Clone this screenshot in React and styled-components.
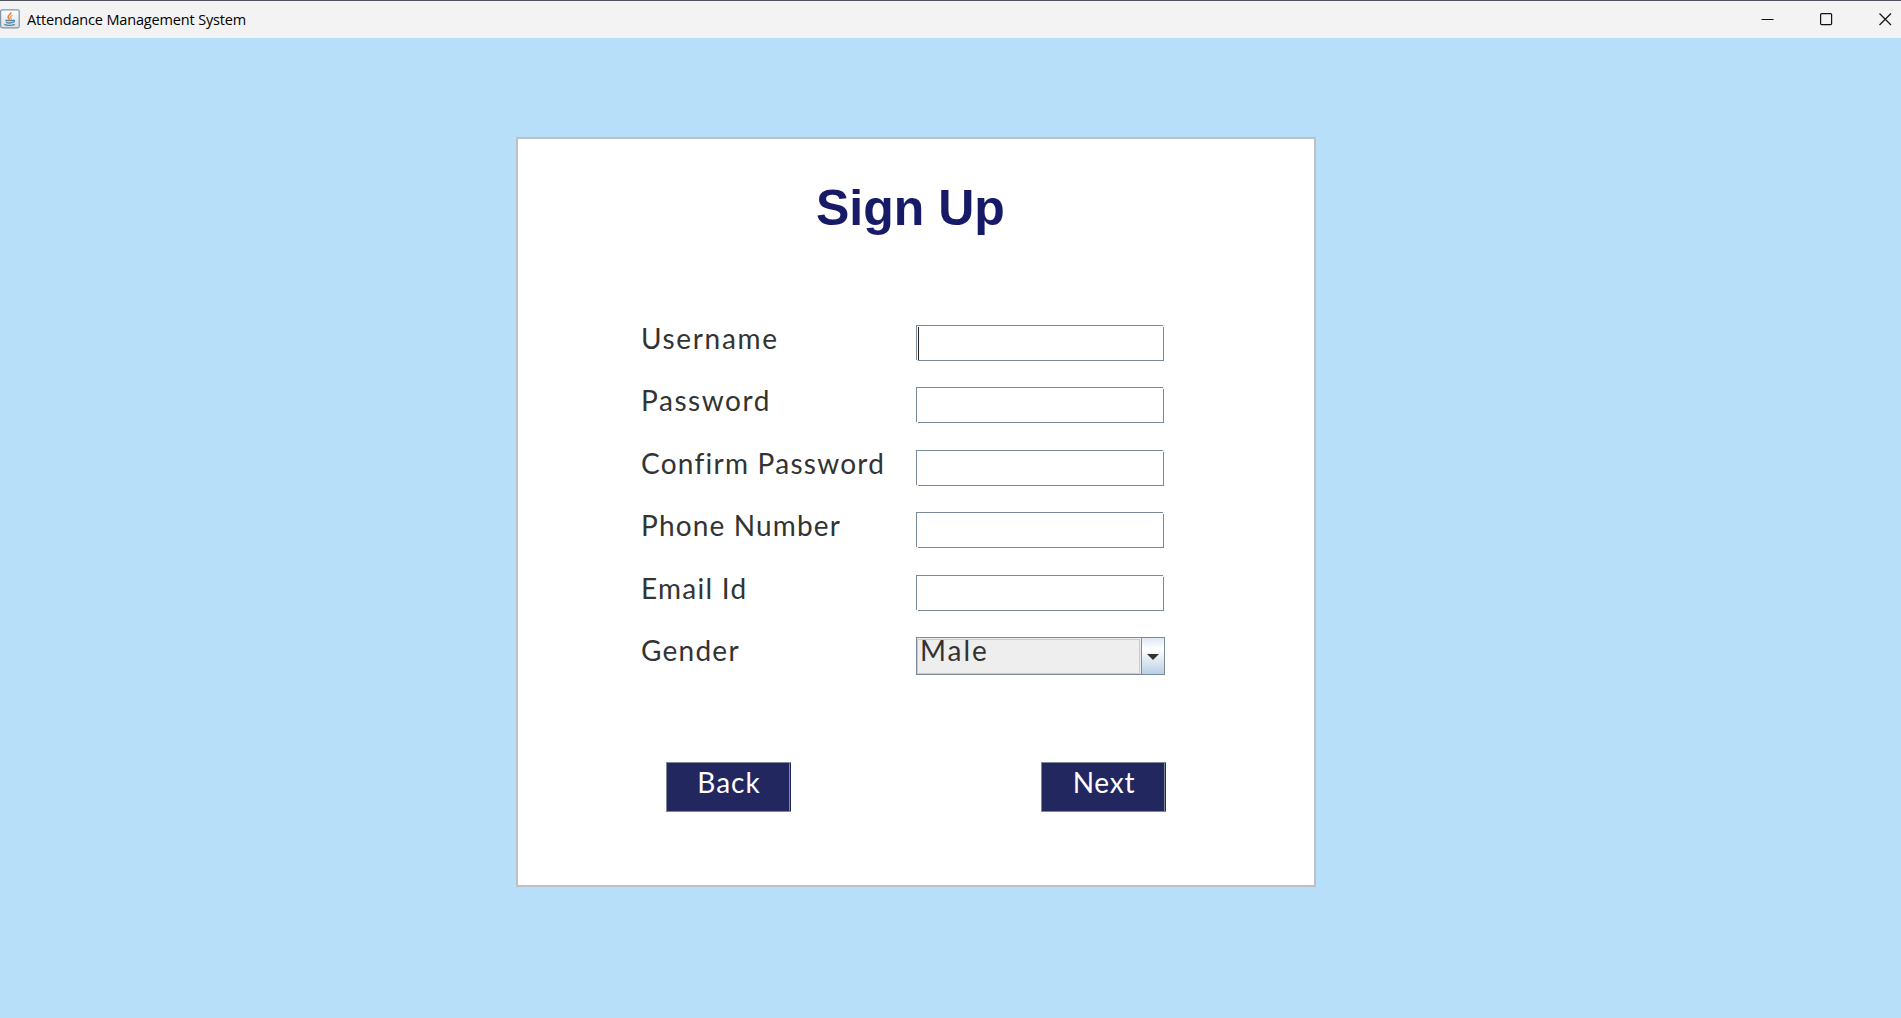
import React from "react";
import styled, { createGlobalStyle } from "styled-components";

const Global = createGlobalStyle`
  * { box-sizing: border-box; }
  body { margin: 0; background: #b7dff9; overflow: hidden; }
`;

const Window = styled.div`
  display: flex;
  flex-direction: column;
  height: 1018px;
  background: #b7dff9;
`;

const TitleBar = styled.header`
  display: flex;
  align-items: center;
  height: 38px;
  flex: none;
  padding-bottom: 1px;
  background: #f3f3f3;
  border-top: 1px solid #50505a;
`;

const AppIcon = styled.svg`
  display: block;
  width: 20px;
  height: 20px;
  flex: none;
  margin-right: 7px;
`;

const WindowTitle = styled.span`
  flex: 1;
  padding-top: 1px;
  font: 14.5px/20px "Open Sans", "Noto Sans", sans-serif;
  letter-spacing: ${(p) => p.$spacing}px;
  color: #000;
  white-space: nowrap;
`;

const Controls = styled.div`
  display: flex;
  gap: 46px;
  padding-right: 9px;
`;

const ControlIcon = styled.svg`
  display: block;
  width: 13px;
  height: 13px;
  fill: none;
  stroke: #111;
  stroke-width: 1.2;
`;

const Content = styled.main`
  padding: 99px 0 0 516px;
`;

const Card = styled.section`
  width: 800px;
  height: 750px;
  background: #fff;
  border: 2px solid #c0c0c0;
`;

const Heading = styled.h1`
  margin: 0;
  padding: 40px 0 0 298px;
  font: bold 50px/58px "Liberation Sans", Arial, sans-serif;
  color: #171a66;
  white-space: nowrap;
`;

const Form = styled.div`
  display: grid;
  grid-template-columns: 274px 250px;
  grid-template-rows: 62px 63px 62px 63px 62px 63px;
  margin: 88px 0 0 124px;
`;

const Label = styled.label`
  font: 28px/38px Lato, "Noto Sans", sans-serif;
  letter-spacing: ${(p) => p.$spacing}px;
  font-variant-ligatures: none;
  color: #333;
  white-space: nowrap;
  margin: -6px 0 0 -1px;
`;

const Field = styled.div`
  position: relative;
  width: 248px;
  height: 36px;
  padding: 1px;
  background: #fff;
  border: 1px solid #7a8a99;
  &::before,
  &::after {
    content: "";
    position: absolute;
    width: 2px;
    height: 2px;
    background: #f4f4f4;
  }
  &::before { left: -1px; bottom: -2px; }
  &::after { right: -2px; top: -1px; }
`;

const Caret = styled.div`
  width: 1px;
  height: 33px;
  background: #222;
`;

const Combo = styled.div`
  display: flex;
  width: 249px;
  height: 38px;
  background: #eee;
  border: 1px solid #7a8a99;
`;

const ComboValue = styled.div`
  width: 223px;
  height: 35px;
  margin-top: 1px;
  padding-left: 2px;
  border: 1px solid #b8cfe5;
  font: 28px/20px Lato, "Noto Sans", sans-serif;
  letter-spacing: ${(p) => p.$spacing}px;
  color: #333;
`;

const ComboButton = styled.div`
  display: flex;
  align-items: center;
  justify-content: center;
  width: 23px;
  margin-left: auto;
  border-left: 1px solid #7a8a99;
  background: linear-gradient(#dde8f3 0%, #fff 30%, #fff 32%, #b8cfe5 100%);
  svg { display: block; margin-top: 2px; }
`;

const Actions = styled.div`
  display: flex;
  gap: 250px;
  margin: 62px 0 0 148px;
`;

const Button = styled.button`
  width: 125px;
  height: 50px;
  margin: 0;
  padding: 0 0 10px 0;
  border: 1px solid #7a8a99;
  border-radius: 0;
  border-right: 0;
  background: #22275f;
  box-shadow: inset -1px 0 #22275f, inset -2px 0 #7a8a99;
  color: #fff;
  font: 28px/38px Lato, "Noto Sans", sans-serif;
  letter-spacing: ${(p) => p.$spacing}px;
`;

const rows = [
  { label: "Username", spacing: 1.65, focused: true },
  { label: "Password", spacing: 1.55 },
  { label: "Confirm Password", spacing: 1.25 },
  { label: "Phone Number", spacing: 1.15 },
  { label: "Email Id", spacing: 1.25 },
];

function JavaIcon() {
  return (
    <AppIcon viewBox="0 0 20 20">
      <defs>
        <linearGradient id="tile" x1="0" y1="0" x2="0" y2="1">
          <stop offset="0" stopColor="#fff" />
          <stop offset="1" stopColor="#d9dfe3" />
        </linearGradient>
      </defs>
      <rect x="0.6" y="0.8" width="18.6" height="18" rx="1.5" fill="url(#tile)" stroke="#7b97aa" strokeWidth="1.2" />
      <path d="M10.7 3.2c.8 2-3.2 3.1-2.6 5.1.2.8 1 1.2 1.4 2" fill="none" stroke="#ed8137" strokeWidth="1.6" />
      <path d="M12.5 6.2c-2 .8-2.3 1.6-1.5 2.7.4.6.2 1-.3 1.5" fill="none" stroke="#ef9554" strokeWidth="1.1" />
      <path d="M5.4 11.5h7.4M6 13.4c1.8.7 4.5.7 6.2 0M12.8 11.3c2.6-.4 2.1 2-.4 2.3M4.3 15.4c2.6 1.4 8 1.4 10.5 0" fill="none" stroke="#5484a5" strokeWidth="1.3" />
    </AppIcon>
  );
}

export default function App() {
  return (
    <Window>
      <Global />
      <TitleBar>
        <JavaIcon />
        <WindowTitle $spacing={-0.16}>Attendance Management System</WindowTitle>
        <Controls>
          <ControlIcon viewBox="0 0 13 13"><path d="M0.5 6.5h12" strokeWidth="1" /></ControlIcon>
          <ControlIcon viewBox="0 0 13 13"><rect x="0.6" y="0.6" width="11" height="11" rx="1" /></ControlIcon>
          <ControlIcon viewBox="0 0 13 13"><path d="M0.5 0.5l11.5 11.5M12 0.5l-11.5 11.5" /></ControlIcon>
        </Controls>
      </TitleBar>
      <Content>
        <Card>
          <Heading>Sign Up</Heading>
          <Form>
            {rows.map((r) => (
              <React.Fragment key={r.label}>
                <Label $spacing={r.spacing}>{r.label}</Label>
                <Field>{r.focused && <Caret />}</Field>
              </React.Fragment>
            ))}
            <Label $spacing={1.25}>Gender</Label>
            <Combo>
              <ComboValue $spacing={2}>Male</ComboValue>
              <ComboButton>
                <svg width="12" height="6" viewBox="0 0 12 6"><path d="M0 0h12l-6 6z" fill="#333" /></svg>
              </ComboButton>
            </Combo>
          </Form>
          <Actions>
            <Button $spacing={1}>Back</Button>
            <Button $spacing={0.8}>Next</Button>
          </Actions>
        </Card>
      </Content>
    </Window>
  );
}
